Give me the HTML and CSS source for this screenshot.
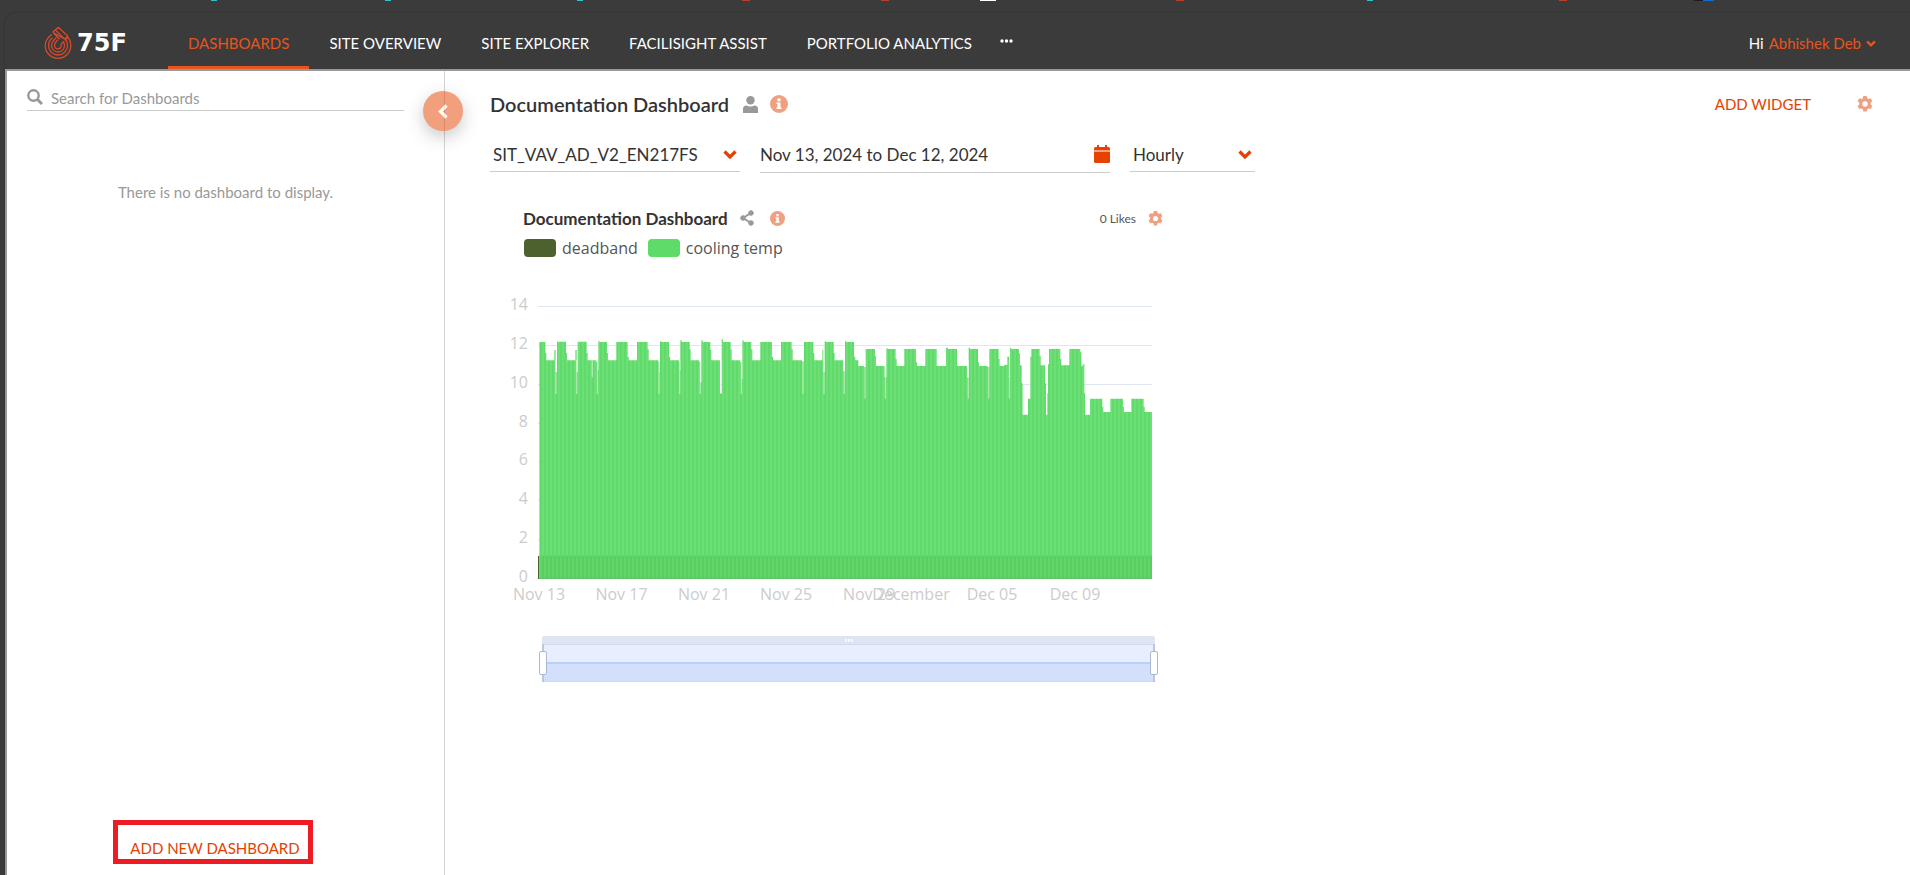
FILE: index.html
```html
<!DOCTYPE html>
<html lang="en">
    <head>
        <meta charset="utf-8">
        <title>Dashboards</title>
        <link rel="stylesheet" href="styles.css">
    </head>
    <body>
        <svg class="tabstrip" height="2" aria-hidden="true">
            <g fill="#2fc4cc">
                <rect x="211" width="6" height="1"/>
                <rect x="385" width="6" height="1"/>
                <rect x="577" width="6" height="1"/>
                <rect x="1367" width="6" height="1"/>
            </g>
            <g fill="#b8402a">
                <rect x="742" width="8" height="1"/>
                <rect x="881" width="8" height="1"/>
                <rect x="1176" width="8" height="1"/>
                <rect x="1559" width="8" height="1"/>
            </g>
            <rect x="980" width="16" height="1" fill="#fff"/>
            <rect x="1694" width="9" height="1" fill="#1c1c1c"/>
            <rect x="1703" width="11" height="1" fill="#0b6fd0"/>
        </svg>
        <div class="app">
            <header class="topbar">
                <a class="logo" href="#">
                    <svg width="28" height="34" viewBox="0 0 28 34" fill="none" stroke="#d8492a" stroke-width="1.3">
                        <path d="M7.700 8.500C3 12 1.200 15 1.200 19.500a12.800 12.800 0 0 0 25.600 0c0-3-1-6-2.700-8.300l-3.400 3.300"/>
                        <path d="M8.500 11.800c-2.500 2-4 4.600-4 7.700a9.500 9.500 0 0 0 19 0c0-2.200-.5-4-1.600-5.500"/>
                        <path d="M12.500 11.500c-3.500 3-5 5-5 8a6.500 6.500 0 0 0 13 0c0-1.500-.4-2.600-1-3.700l-2.500 2.400c.8 3.300-1 4.600-3 4.600s-3.500-1.500-3.500-3.500 1-3.300 3.500-5.500"/>
                        <path d="M8.700 6.300l11.800 6.700M8.700 6.300l2.600-2.400 9.200 9.100M14.300 1.300l9.400 8.700-3.200 3M14.300 1.300l-3 2.600M8.700 6.300l7 7"/>
                    </svg>
                    <span class="logo-name">75F</span>
                </a>
                <nav class="nav">
                    <a class="nav-item active" href="#">DASHBOARDS</a>
                    <a class="nav-item" href="#">SITE OVERVIEW</a>
                    <a class="nav-item" href="#">SITE EXPLORER</a>
                    <a class="nav-item" href="#">FACILISIGHT ASSIST</a>
                    <a class="nav-item" href="#">PORTFOLIO ANALYTICS</a>
                    <button class="more" aria-label="More">
                        <svg width="13" height="4" viewBox="0 0 13 4" fill="#fff"><circle cx="2" cy="2" r="1.700"/><circle cx="6.500" cy="2" r="1.700"/><circle cx="11" cy="2" r="1.700"/></svg>
                    </button>
                </nav>
                <div class="user">
                    <span>Hi</span>
                    <button class="user-name">Abhishek Deb
                        <svg width="10" height="7" viewBox="0 0 14 9" fill="none" stroke="currentColor" stroke-width="3.400"><path d="M1.500 1.500L7 7l5.500-5.500"/></svg>
                    </button>
                </div>
            </header>
            <div class="content">
                <aside class="sidebar">
                    <label class="search">
                        <svg width="16" height="16" viewBox="0 0 16 16" fill="none" stroke="#999"><circle cx="6.500" cy="6.500" r="5.200" stroke-width="2.400"/><path d="M10.500 10.500L15 15" stroke-width="3"/></svg>
                        <input type="text" placeholder="Search for Dashboards" aria-label="Search for Dashboards">
                    </label>
                    <p class="empty">There is no dashboard to display.</p>
                    <div class="add-box">
                        <button class="link-btn">ADD NEW DASHBOARD</button>
                    </div>
                    <button class="collapse" aria-label="Collapse">
                        <svg width="10" height="15" viewBox="0 0 10 15" fill="none" stroke="#fff" stroke-width="3.200"><path d="M8.500 1.500L2.500 7.500l6 6"/></svg>
                    </button>
                </aside>
                <main class="main">
                    <div class="title-row">
                        <h1>Documentation Dashboard</h1>
                        <svg class="icon-user" width="15" height="17" viewBox="0 0 15 17" fill="#999"><circle cx="7.500" cy="4.200" r="4.200"/><path d="M0 17v-4a3.500 3.500 0 0 1 3.500-3.500c2.500 1.300 5.500 1.300 8 0A3.500 3.500 0 0 1 15 13v4z"/></svg>
                        <svg width="18" height="18" viewBox="0 0 18 18"><circle cx="9" cy="9" r="9" fill="#f0a080"/><path d="M7.500 3.500h3v2.700h-3zM6.500 7.500h4v5h1V14h-5v-1.500h1V9h-1z" fill="#fff"/></svg>
                        <button class="link-btn add-widget">ADD WIDGET</button>
                        <button class="gear" aria-label="Settings">
                            <svg width="16" height="16" viewBox="0 0 16 16"><use href="#gear"/></svg>
                        </button>
                    </div>
                    <div class="filters">
                        <div class="field site">
                            <select aria-label="Site"><option>SIT_VAV_AD_V2_EN217FS</option></select>
                            <svg width="14" height="9" viewBox="0 0 14 9" fill="none" stroke="#e64100" stroke-width="3.200"><path d="M1.500 1.500L7 7l5.500-5.500"/></svg>
                        </div>
                        <div class="field range">
                            <input type="text" value="Nov 13, 2024 to Dec 12, 2024" aria-label="Date range">
                            <svg width="16" height="18" viewBox="0 0 16 18" fill="#e64100"><path d="M3 0h2v2h6V0h2v2h1.500A1.500 1.500 0 0 1 16 3.500V5.500H0V3.500A1.500 1.500 0 0 1 1.500 2H3zM0 6.500h16v10a1.500 1.500 0 0 1-1.500 1.500h-13A1.500 1.500 0 0 1 0 16.500z"/></svg>
                        </div>
                        <div class="field period">
                            <select aria-label="Period"><option>Hourly</option></select>
                            <svg width="14" height="9" viewBox="0 0 14 9" fill="none" stroke="#e64100" stroke-width="3.200"><path d="M1.500 1.500L7 7l5.500-5.500"/></svg>
                        </div>
                    </div>
                    <section class="widget">
                        <div class="widget-head">
                            <h2>Documentation Dashboard</h2>
                            <svg class="icon-share" width="14" height="16" viewBox="0 0 14 16" fill="#999" stroke="#999"><path d="M11 3L3 8l8 5" fill="none" stroke-width="2"/><circle cx="11" cy="3" r="2.300"/><circle cx="3" cy="8" r="2.300"/><circle cx="11" cy="13" r="2.300"/></svg>
                            <svg width="15" height="15" viewBox="0 0 18 18"><circle cx="9" cy="9" r="9" fill="#f0a080"/><path d="M7.500 3.500h3v2.700h-3zM6.500 7.500h4v5h1V14h-5v-1.500h1V9h-1z" fill="#fff"/></svg>
                            <span class="likes">0 Likes</span>
                            <button class="gear" aria-label="Widget settings">
                                <svg width="15" height="15" viewBox="0 0 16 16"><path id="gear" fill="#f0a080" fill-rule="evenodd" d="M6.300 0h3.400l.5 2.200 1.300.8 2.200-.7 1.700 3-1.700 1.500v1.800l1.700 1.500-1.700 3-2.200-.7-1.300.8-.5 2.300H6.300l-.5-2.300-1.300-.8-2.200.7-1.700-3 1.700-1.500V6.800L.6 5.300l1.700-3 2.200.7 1.300-.8zM8 5.200a2.700 2.700 0 1 0 0 5.500 2.700 2.700 0 0 0 0-5.500z"/></svg>
                            </button>
                        </div>
                        <ul class="legend">
                            <li><i class="swatch deadband"></i>deadband</li>
                            <li><i class="swatch cooling"></i>cooling temp</li>
                        </ul>
                        <svg class="chart" id="chart" width="680" height="400"></svg>
                    </section>
                </main>
            </div>
        </div>
        <script src="chart.js"></script>
    </body>
</html>
```
FILE: styles.css
```css
* {
    box-sizing: border-box;
}
body {
    margin: 0;
    height: 100vh;
    display: flex;
    flex-direction: column;
    overflow: hidden;
    background: #3b3b3b;
    font-family: Lato, "Liberation Sans", sans-serif;
    font-size: 15px;
    color: #333;
}
button {
    padding: 0;
    border: 0;
    background: none;
    font: inherit;
    cursor: pointer;
}
a {
    text-decoration: none;
}
svg {
    display: block;
    flex: none;
}
.tabstrip {
    width: 100%;
}
.app {
    flex: 1;
    display: flex;
    flex-direction: column;
    margin: 11px 0 0 5px;
    min-height: 0;
    border-top-left-radius: 10px;
    box-shadow: 0 0 2px #2c2c2c;
}

/* top bar */
.topbar {
    display: flex;
    height: 56px;
    padding-right: 34px;
}
.logo {
    display: flex;
    align-items: center;
    gap: 5px;
    width: 163px;
    padding: 4px 0 0 39px;
}
.logo-name {
    color: #fff;
    font: bold 24px/30px "DejaVu Sans", sans-serif;
}
.nav {
    display: flex;
    align-items: stretch;
}
.nav-item {
    padding: 5px 20px 0;
    border-bottom: 3px solid transparent;
    color: #fff;
    line-height: 50px;
    white-space: nowrap;
}
.nav-item.active {
    color: #e8541e;
    border-color: #e8541e;
}
.more {
    padding: 0 8px;
}
.user {
    display: flex;
    align-items: center;
    gap: 5px;
    margin-left: auto;
    padding-top: 4px;
    color: #fff;
}
.user-name {
    display: flex;
    align-items: center;
    gap: 5px;
    color: #e8541e;
}

/* body */
.content {
    flex: 1;
    display: flex;
    min-height: 0;
    background: #fff;
    border-top: 2px solid #999;
    border-left: 2px solid #999;
}
.sidebar {
    position: relative;
    display: flex;
    flex-direction: column;
    width: 438px;
    padding: 14px 40px 11px 20px;
    border-right: 1px solid #d4d4d4;
}
.search {
    display: flex;
    align-items: center;
    gap: 8px;
    height: 26px;
    padding-bottom: 2px;
    border-bottom: 1px solid #ccc;
}
.search input {
    flex: 1;
    padding: 2px 0 0;
    border: 0;
    outline: 0;
    font: inherit;
}
.search input::placeholder {
    color: #999;
}
.empty {
    margin: 71px 0 0 20px;
    line-height: 20px;
    text-align: center;
    color: #999;
}
.link-btn {
    color: #e64100;
    line-height: 20px;
}
.add-box {
    align-self: center;
    width: 200px;
    height: 44px;
    margin: auto 6px 0 0;
    padding: 13px 0 0 5px;
    border: 5px solid #ed1c24;
    text-align: center;
}
.collapse {
    position: absolute;
    top: 20px;
    right: -19px;
    display: flex;
    align-items: center;
    justify-content: center;
    width: 40px;
    height: 40px;
    border-radius: 50%;
    background: #e64100;
    opacity: .5;
    box-shadow: 0 6px 16px rgba(0, 0, 0, .4);
}
.main {
    flex: 1;
    min-width: 0;
    padding: 19px 37px 0 45px;
}
.title-row {
    display: flex;
    align-items: center;
    height: 28px;
}
h1,
h2 {
    margin: 0;
}
h1 {
    font-size: 20px;
    font-weight: 600;
}
.icon-user {
    margin: 0 12px 0 14px;
}
.add-widget {
    margin-left: auto;
}
.title-row .gear {
    margin-left: 46px;
}

/* filters */
.filters {
    display: flex;
    align-items: flex-start;
    gap: 20px;
    margin-top: 20px;
}
.field {
    position: relative;
    height: 34px;
    border-bottom: 1px solid #ccc;
}
.field select,
.field input {
    width: 100%;
    height: 32px;
    padding: 0 3px;
    border: 0;
    outline: 0;
    appearance: none;
    background: none;
    color: #333;
    font: 17px Lato, sans-serif;
}
.field input {
    padding: 0;
}
.field svg {
    position: absolute;
    top: 12px;
    right: 3px;
    pointer-events: none;
}
.site {
    width: 250px;
}
.range {
    width: 350px;
    height: 35px;
}
.range svg {
    top: 7px;
    right: 0;
}
.period {
    width: 125px;
}

/* widget */
.widget {
    width: 680px;
    margin-top: 34px;
}
.widget-head {
    display: flex;
    align-items: center;
    height: 22px;
    padding: 0 7px 0 33px;
}
h2 {
    font-size: 17px;
    font-weight: 700;
}
.icon-share {
    margin: 0 16px 0 12px;
}
.likes {
    margin-left: auto;
    font-size: 12px;
    color: #555;
}
.widget .gear {
    margin-left: 12px;
}
.legend {
    display: flex;
    gap: 10px;
    margin: 8px 0 0;
    padding: 0 0 0 34px;
    list-style: none;
    color: #555;
    font: 16px/22px "Open Sans", "Noto Sans", sans-serif;
}
.legend li {
    display: flex;
    align-items: center;
    gap: 6px;
}
.swatch {
    width: 32px;
    height: 18px;
    border-radius: 4px;
}
.deadband {
    background: #4d612e;
}
.cooling {
    background: #5edb68;
}
.chart {
    margin-top: 31px;
}
.chart text {
    fill: #ccc;
    font: 500 16px "Open Sans", "Noto Sans", sans-serif;
}
```
FILE: chart.js
```js
// level steps of the cooling temp series: x, y (a third of a pixel each)
var steps = [
    [148,156],[166,189],[169,211],[193,180],[197,246],[201,155],[228,189],[231,211],[256,180],[260,246],
    [263,155],[290,189],[293,211],[319,216],[322,241],[325,152],[328,156],[351,189],[354,211],
    [379,156],[413,200],[416,211],[441,156],[473,178],[476,211],[505,216],[508,245],
    [510,154],[514,156],[537,200],[540,211],[567,216],[569,241],[571,151],[575,156],[599,178],[602,211],[628,216],[631,277],
    [634,151],[638,156],[661,180],[664,211],[690,310],[695,148],[699,156],[722,178],[725,211],[751,216],[754,267],
    [757,151],[761,156],[784,178],[787,211],[811,156],[846,200],[849,211],[873,156],[905,178],[908,211],[936,214],
    [942,156],[970,189],[973,211],[997,180],[1000,245],[1004,154],[1008,156],[1031,189],[1034,211],[1060,244],
    [1065,154],[1069,156],[1092,200],[1096,211],[1105,228],[1122,231],[1127,177],[1155,197],[1158,228],[1184,262],
    [1189,175],[1193,177],[1217,207],[1220,228],[1243,177],[1278,217],[1281,228],[1306,177],[1340,228],
    [1368,173],[1374,177],[1401,228],[1431,262],[1436,173],[1440,177],[1464,217],[1467,228],[1493,231],
    [1498,177],[1526,207],[1529,228],[1543,224],[1552,200],[1557,262],[1560,173],[1564,177],[1587,190],[1590,226],
    [1595,280],[1598,374],[1614,326],[1621,200],[1624,177],[1649,197],[1652,226],[1665,280],[1668,374],[1672,310],
    [1674,223],[1677,177],[1711,207],[1714,226],[1738,177],[1771,187],[1774,228],[1778,223],[1783,310],[1785,374],
    [1800,326],[1837,350],[1840,366],[1861,326],[1899,350],[1902,366],[1924,326],[1961,350],[1964,366]
];
// short drops at the start of a day: x, bottom
var dips = [
    [197,312],[259,312],[306,262],[321,312],[506,312],[568,312],[630,312],[692,312],[753,312],[938,312],[1001,312],
    [1062,312],[1124,326],[1185,326],[1434,326],[1495,326],[1557,326]
];
var labels = [[49,'Nov 13'],[131.5,'Nov 17'],[214,'Nov 21'],[296,'Nov 25'],[379,'Nov 29'],[421,'December'],[502,'Dec 05'],[585,'Dec 09']];
var i, y, path = 'M148 866', out = '';

out += '<defs><pattern id="bars" width="12" height="10" patternUnits="userSpaceOnUse">' +
    '<rect width="12" height="10" fill="#5edb68"/><rect width="6" height="10" fill="#6edf78"/></pattern>' +
    '<pattern id="low" width="12" height="10" patternUnits="userSpaceOnUse">' +
    '<rect width="12" height="10" fill="#5dd867"/><rect width="6" height="10" fill="#5ccc63"/></pattern></defs>';

for (i = 0; i <= 7; i++) {
    y = 288 - Math.round(i * 38.86);
    out += '<rect x="48" y="' + y + '" width="614" height="1" fill="#e0e6f1"/>';
    out += '<text x="38" y="' + (y + 4) + '" text-anchor="end">' + i * 2 + '</text>';
}
for (i = 0; i < steps.length; i++) {
    path += 'V' + (i ? steps[i - 1][1] : steps[0][1]) + 'H' + steps[i][0] + 'V' + steps[i][1];
}
path += 'H1986V866Z';
out += '<g transform="scale(.33333)"><path d="' + path + '" fill="url(#bars)"/>';
for (i = 0; i < dips.length; i++) {
    out += '<rect x="' + (dips[i][0] - 1) + '" y="211" width="4" height="' + (dips[i][1] - 211) + '" fill="#fff" opacity=".45"/>';
}
out += '<rect x="148" y="797" width="1838" height="69" fill="url(#low)"/></g>';
out += '<rect x="48" y="266" width="1" height="23" fill="#4d612e"/>';
out += '<rect x="49" y="288" width="613" height="1" fill="#5cc463"/>';
for (i = 0; i < labels.length; i++) {
    out += '<text x="' + labels[i][0] + '" y="310" text-anchor="middle">' + labels[i][1] + '</text>';
}

// zoom slider under the plot
out += '<rect x="52" y="346" width="613" height="9" rx="2" fill="#dee4f2"/>' +
    '<rect x="52" y="354" width="613" height="38" fill="#e7eefd"/>' +
    '<rect x="52" y="354" width="613" height="1" fill="#d2dbee"/>' +
    '<rect x="52" y="373" width="613" height="19" fill="#d3e0fc"/>' +
    '<rect x="52" y="372" width="613" height="2" fill="#bbcff9"/>' +
    '<rect x="52" y="391" width="613" height="1" fill="#d2dbee"/>' +
    '<g fill="#fff" opacity=".8"><rect x="355" y="349" width="2" height="3"/><rect x="358" y="349" width="2" height="3"/><rect x="361" y="349" width="2" height="3"/></g>' +
    '<g fill="#bcc7de"><rect x="52" y="354" width="2" height="38"/><rect x="663" y="354" width="2" height="38"/></g>' +
    '<g fill="#fff" stroke="#acb8d1"><rect x="49.5" y="361.500" width="7" height="23" rx="1.500"/><rect x="660.500" y="361.500" width="7" height="23" rx="1.500"/></g>';
document.getElementById('chart').innerHTML = out;
```
